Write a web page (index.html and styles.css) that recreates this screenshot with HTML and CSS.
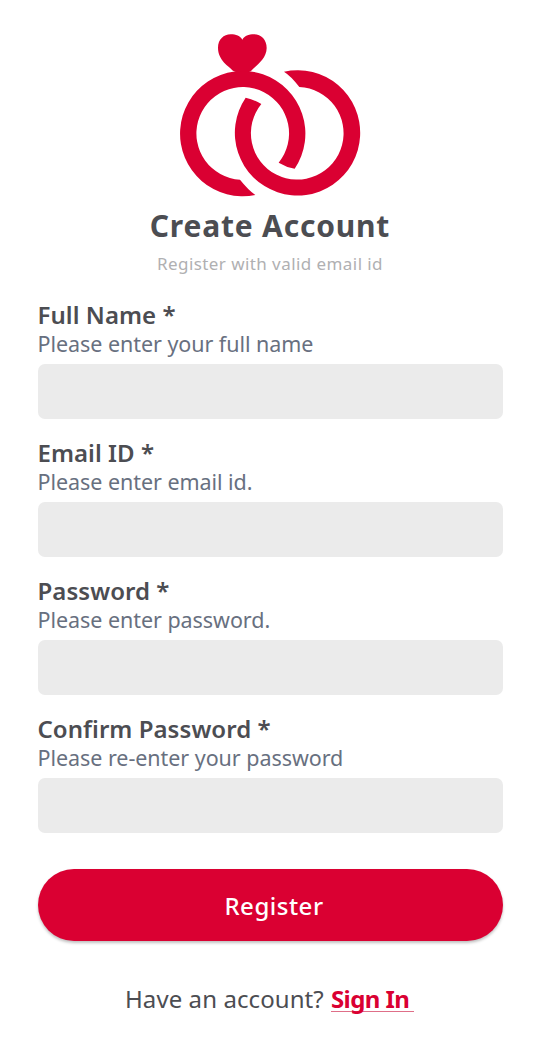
FILE: index.html
```html
<!DOCTYPE html>
<html lang="en">
<head>
<meta charset="utf-8">
<meta name="viewport" content="width=device-width, initial-scale=1">
<title>Create Account</title>
<link rel="stylesheet" href="styles.css">
</head>
<body>
<main class="page">
  <svg class="logo" viewBox="1 0 600 540" aria-hidden="true">
    <path d="M190 137C178 124 145 106 145 68C145 44 162 28 183 28C199 28 212 33 218 44C224 33 237 28 253 28C275 28 291 45 291 69C291 103 256 124 244 138L218 150Z"/>
    <path d="M375 431A188 188 0 1 0 257 510Q235 494 211 464A139 139 0 1 1 327 413Q350 427 375 431Z"/>
    <path d="M228 218A188 188 0 1 0 343 140Q365 154 389 186A139 139 0 1 1 275 237Q254 224 228 218Z"/>
  </svg>
  <h1 class="title">Create Account</h1>
  <p class="subtitle">Register with valid email id</p>
  <form class="form">
    <div class="field">
      <label class="label" for="name">Full Name *</label>
      <p class="hint">Please enter your full name</p>
      <input class="input" id="name" type="text">
    </div>
    <div class="field">
      <label class="label" for="email">Email ID *</label>
      <p class="hint">Please enter email id.</p>
      <input class="input" id="email" type="email">
    </div>
    <div class="field">
      <label class="label" for="password">Password *</label>
      <p class="hint">Please enter password.</p>
      <input class="input" id="password" type="password">
    </div>
    <div class="field">
      <label class="label" for="confirm">Confirm Password *</label>
      <p class="hint">Please re-enter your password</p>
      <input class="input" id="confirm" type="password">
    </div>
    <button class="register" type="button">Register</button>
  </form>
  <p class="footer"><span class="question">Have an account?</span><a class="signin" href="#">Sign In</a></p>
</main>
</body>
</html>
```
FILE: styles.css
```css
* { box-sizing: border-box; margin: 0; padding: 0; }
body {
  background: #fff;
  color: #4c4d52;
  font-family: "Noto Sans", "Open Sans", sans-serif;
}
.page {
  width: 540px;
  height: 1042px;
  padding: 25px 37.5px 0;
  display: flex;
  flex-direction: column;
  align-items: center;
}
.logo { width: 200px; height: 180px; fill: #da0032; display: block; }
.title { height: 40px; margin-top: 1px; line-height: 40px; font-size: 30px; font-weight: 700; letter-spacing: 0.8px; white-space: nowrap; }
.subtitle { height: 24px; margin-top: 6px; line-height: 24px; font-size: 17px; letter-spacing: 0.43px; color: #b0b0b2; white-space: nowrap; }
.form { width: 465px; margin-top: 24px; display: flex; flex-direction: column; }
.field { height: 138px; display: flex; flex-direction: column; align-items: flex-start; }
.label { height: 30px; line-height: 30px; font-size: 24px; font-weight: 600; letter-spacing: 0.05px; white-space: nowrap; }
.hint { height: 28px; line-height: 28px; font-size: 21.5px; letter-spacing: -0.05px; color: #68707f; white-space: nowrap; }
.input { width: 100%; height: 55px; margin-top: 5.5px; border: 0; border-radius: 7px; background: #ebebeb; outline: 0; }
.register {
  height: 72px;
  margin-top: 17px;
  padding: 2px 0 0 8px;
  border: 0;
  border-radius: 36px;
  background: #da0032;
  box-shadow: 0 2px 3px rgba(0, 0, 0, 0.25);
  color: #fff;
  font: 500 24px/70px "Noto Sans", "Open Sans", sans-serif;
  letter-spacing: 0.5px;
}
.footer { width: 465px; margin-top: 41px; padding-left: 87.5px; display: flex; font-size: 24px; line-height: 34px; white-space: nowrap; }
.question { width: 206px; letter-spacing: 0.08px; }
.signin { width: 83px; height: 30px; color: #da0032; font-weight: 700; letter-spacing: -0.6px; text-decoration: none; border-bottom: 1px solid #df6f88; }
```
